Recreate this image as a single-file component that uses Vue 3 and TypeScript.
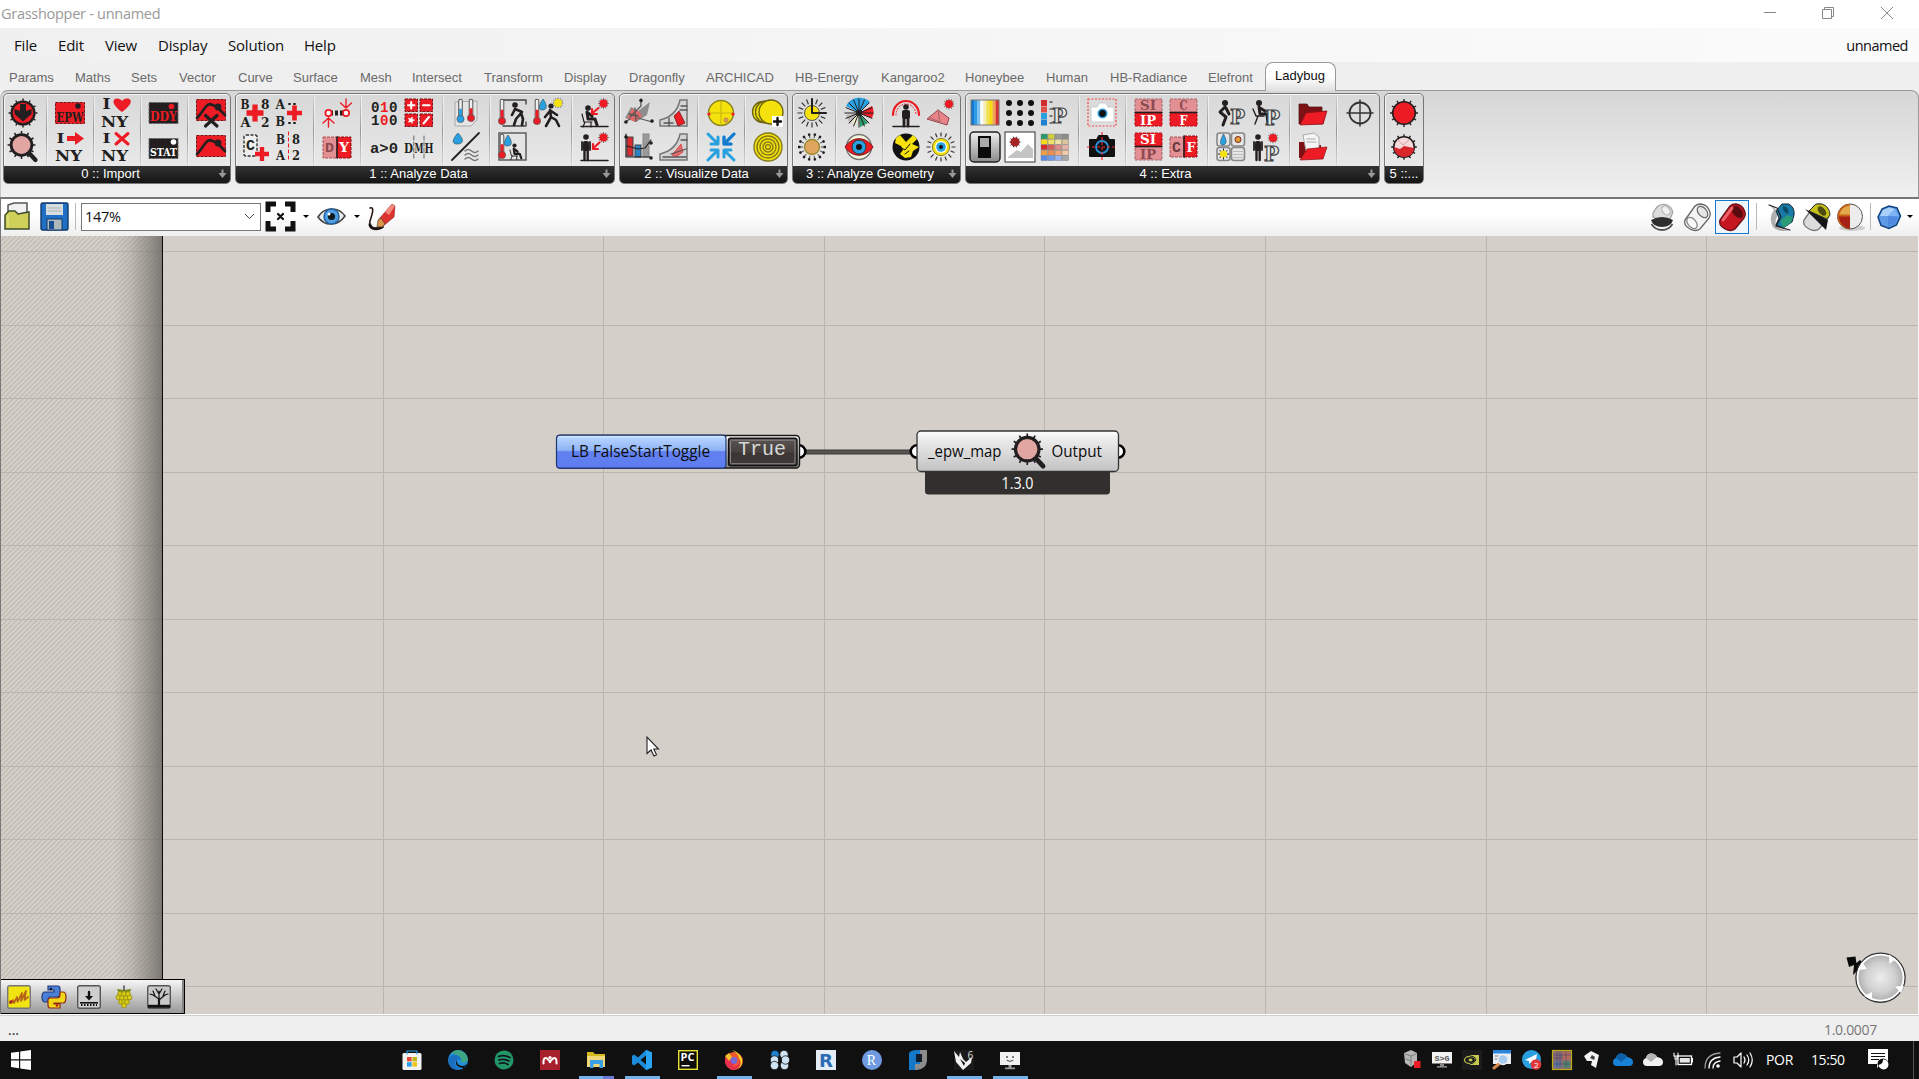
<script setup lang="ts">
interface Tab { label: string; width: number }
interface Group { title: string; width: number; more: boolean; titleShift?: number; sections: string[][][] }
interface Glyph { id: string; size?: number }
interface Task { id: string; state?: 'open' | 'multi' }

const RED = '#ed1c24'
const INK = '#231f20'
const BLUE = '#29a0e0'
const YEL = '#f5e10c'

const slab = (x: number, y: number, size: number, s: string, fill: string, len: number): string =>
  `<text x="${x}" y="${y}" font-family="DejaVu Serif, serif" font-weight="700" font-size="${size}" fill="${fill}" textLength="${len}" lengthAdjust="spacingAndGlyphs">${s}</text>`
const mono = (x: number, y: number, size: number, s: string, fill: string, len: number): string =>
  `<text x="${x}" y="${y}" font-family="Liberation Mono, monospace" font-weight="700" font-size="${size}" fill="${fill}" textLength="${len}" lengthAdjust="spacingAndGlyphs">${s}</text>`
const line = (d: string, c: string, w = 2): string =>
  `<path d="${d}" fill="none" stroke="${c}" stroke-width="${w}" stroke-linecap="round" stroke-linejoin="round"/>`
const fill = (d: string, c: string, extra = ''): string => `<path d="${d}" fill="${c}" ${extra}/>`
const disc = (x: number, y: number, r: number, c: string, extra = ''): string => `<circle cx="${x}" cy="${y}" r="${r}" fill="${c}" ${extra}/>`
const box = (x: number, y: number, w: number, h: number, c: string, extra = ''): string =>
  `<rect x="${x}" y="${y}" width="${w}" height="${h}" fill="${c}" ${extra}/>`
const rays = (cx: number, cy: number, r1: number, r2: number, n: number, c: string, w = 1.5): string => {
  let d = ''
  for (let i = 0; i < n; i++) {
    const a = (i / n) * Math.PI * 2
    d += `M${(cx + r1 * Math.cos(a)).toFixed(1)} ${(cy + r1 * Math.sin(a)).toFixed(1)}L${(cx + r2 * Math.cos(a)).toFixed(1)} ${(cy + r2 * Math.sin(a)).toFixed(1)}`
  }
  return `<path d="${d}" fill="none" stroke="${c}" stroke-width="${w}"/>`
}
const dashed = (c: string): string => `stroke="${c}" stroke-width="1" stroke-dasharray="3 1"`
const plus = (x: number, y: number, r: number, c = RED): string =>
  line(`M${x - r} ${y}H${x + r}M${x} ${y - r}V${y + r}`, c, r * 0.62).replace(/round/g, 'butt')
const thermo = (x: number, c: string, top: number, bottom: number): string =>
  line(`M${x} ${top}V${bottom}`, '#555', 4.6) + line(`M${x} ${top}V${bottom}`, '#eee', 2.6) + line(`M${x} ${(top + bottom) / 2}V${bottom}`, c, 3) + disc(x, bottom, 3.6, c, 'stroke="#555" stroke-width=".7"')
const drop = (x: number, y: number, k: number): string =>
  fill(`M${x} ${y}C${x + k} ${y + 4} ${x + k * 2} ${y + 11} ${x - 1} ${y + 11}C${x - k * 2} ${y + 11} ${x - k} ${y + 4} ${x} ${y}Z`, BLUE, 'stroke="#3a5a70" stroke-width=".7"')
const sun = (x: number, y: number, c: string): string => rays(x, y, 3, 5.3, 12, '#555', 0.9) + disc(x, y, 4, c)
const letterP = (x: number, y: number): string =>
  `<text x="${x}" y="${y}" font-family="DejaVu Serif, serif" font-weight="700" font-size="20" fill="#e8e8e8" stroke="#444" stroke-width="1.2" textLength="15" lengthAdjust="spacingAndGlyphs">P</text>`
const seated = (dx = 0): string =>
  disc(8 + dx, 10, 2.8, INK) + line(`M${7 + dx} 14L${8 + dx} 21H${15 + dx}L${17 + dx} 27M${8 + dx} 15L${12 + dx} 18`, INK, 3) + line(`M${2 + dx} 16L${4 + dx} 24H${12 + dx}M${5 + dx} 24L${3 + dx} 29M${11 + dx} 24V29`, INK, 1.2)
const standing = (dx = 0, dy = 0): string =>
  disc(7 + dx, 5 + dy, 2.8, INK) + box(4 + dx, 9 + dy, 6, 10, INK, 'rx="2"') + line(`M${3 + dx} ${10 + dy}V${18 + dy}M${11 + dx} ${10 + dy}V${18 + dy}`, INK, 1.8) + line(`M${5.5 + dx} ${18 + dy}V${28 + dy}M${8.7 + dx} ${18 + dy}V${28 + dy}`, INK, 2.4)
const chart = (): string =>
  box(0.5, 1.5, 29, 21, RED, dashed('#7b1015')) + line('M1 20C6 15 8 10 11 7.500C14 4.500 17 7 21 9L29 17', INK, 2.6) + disc(22, 9, 3.4, INK)
const aFrame = (c: string, x2 = false): string =>
  box(1, x2 ? 15 : 1, 27, 13, c, `stroke="${c === RED ? '#b01018' : '#a8686c'}" stroke-width="1" stroke-dasharray="3 1"`)
const unit = (a: string, b: string, topOn: boolean): string =>
  aFrame(topOn ? RED : '#e29094') + aFrame(topOn ? '#e29094' : RED, true) +
  slab(a.length > 1 ? 6 : 10.5, 12, 12, a, topOn ? '#fff' : '#8b4a50', a.length > 1 ? 16 : 8) +
  slab(b.length > 1 ? 6 : 10.5, 26.5, 12, b, topOn ? '#8b4a50' : '#fff', b.length > 1 ? 16 : 8) +
  line('M1 14.5H28', INK, 1.6)
const lens = (): string =>
  rays(13.5, 13, 11, 13.9, 12, INK, 1.5) + line('M21.500 21.500L27.500 28', INK, 4.2) + disc(13.5, 13, 10.4, '#e2a6a2', `stroke="${INK}" stroke-width="2.800"`)
const wind = (y: number, c: string, x = 14): string =>
  line([0, 4, 8].map((o) => `M${x} ${y + o}q3 -3 6.5 0t6.5 0`).join(''), c, 1.5)
const palette = (): string => {
  const rows = [['#2b9a6b', '#d5d03c', '#9a9a98', '#8c8c88'], ['#f5dd1a', '#f2e06a', '#efe1a6', '#ddc49d'], ['#d22c2c', '#d85a55', '#dc8c88', '#e3b4a8'], ['#eda04a', '#ef8d50', '#f2a77a', '#f1caa8'], ['#5b8bea', '#6f9bee', '#98b5f0', '#a9a9a9']]
  return rows.map((r, j) => r.map((c, i) => box(1 + i * 7, 2 + j * 5.4, 6.6, 5, c, 'stroke="#777" stroke-width=".4"')).join('')).join('')
}
const dots = (): string => {
  let s = ''
  for (let i = 0; i < 9; i++) s += disc(4 + (i % 3) * 11, 5 + Math.floor(i / 3) * 10, 3, '#111')
  return s
}
const gauge = (d: string): string => line(d, '#555', 1.3)

const art: Record<string, string> = {
  download: rays(15, 15, 12, 14.4, 12, INK, 1.4) + disc(15, 15, 11.4, RED, `stroke="${INK}" stroke-width="2.400"`) + fill('M12 6H18V13L23.500 11V16L15 23.500L6.500 16V11L12 13Z', INK),
  lens: lens(),
  epw: box(0.5, 4.5, 29, 21, RED, dashed('#7b1015')) + disc(23, 8, 2.8, INK) + slab(1.5, 23.5, 13, 'EPW', INK, 27),
  iny: slab(0.5, 11, 14, 'I', INK, 8) + slab(-1, 28.5, 15.5, 'NY', INK, 27) + fill('M20 14C7.500 5 11.500 0 15.500 .5C18.500 .8 20 3 20 3C20 3 21.500 .8 24.500 .5C29.500 0 32.500 5 20 14Z', RED),
  inyArrow: slab(1.5, 11, 13, 'I', INK, 8) + slab(0, 28.5, 15, 'NY', INK, 27) + fill('M12 4H20V0L29 6.500L20 13V9H12Z', RED),
  inyCross: slab(0.5, 11, 13, 'I', INK, 8) + slab(-1, 28.5, 15, 'NY', INK, 27) + line('M14 1.500L26 12M26 1.500L14 12', RED, 3),
  ddy: box(0, 4.5, 29, 21, INK, dashed('#666')) + disc(22.5, 8.5, 2.8, RED) + slab(1, 22.5, 12.5, 'DDY', RED, 27),
  stat: box(0, 6.5, 29, 20, INK, dashed('#666')) + disc(24.5, 10, 2.8, '#fff') + slab(1, 23.5, 11, 'STAT', '#fff', 27),
  chartX: chart() + line('M9.500 17.500L21 28M21 17.500L9.500 28', INK, 3.2),
  chart: `<g transform="translate(0 2)">${chart()}</g>`,

  addAB: slab(0.5, 11, 13, 'B', INK, 9) + slab(21, 11, 13, '8', INK, 8.5) + slab(0.5, 29, 13, 'A', INK, 10) + slab(21, 29, 13, '2', INK, 8.5) + plus(15, 15, 8.5),
  addList: slab(0.5, 10.5, 12.5, 'A', INK, 9.5) + slab(0.5, 28, 12.5, 'B', INK, 9.5) + line('M14 6H24M14 25H24', INK, 2).replace('fill="none"', 'fill="none" stroke-dasharray="1 4"') + plus(19.5, 15, 7.5),
  addC: box(4, 3, 13, 21, '#eee', 'stroke="#333" stroke-width="1.400" stroke-dasharray="3 1.500" rx="2"') + mono(6, 18, 14, 'C', INK, 9) + plus(22, 22, 7),
  split: slab(1, 12, 12.5, 'B', INK, 9) + slab(17, 12, 12.5, '8', INK, 8) + slab(1, 28, 12.5, 'A', INK, 9) + slab(17, 28, 12.5, '2', INK, 8) + line('M13.500 0V29', RED, 1).replace('fill="none"', 'fill="none" stroke-dasharray="3 3"'),
  bridge: line('M8 15H22', INK, 5).replace('round', 'butt').replace('fill="none"', 'fill="none" stroke-dasharray="3 2"') + disc(6.5, 15, 4, RED) + disc(6.5, 15, 2.2, '#fff') + disc(24, 15, 4, RED) + disc(24, 15, 2.2, '#fff') + line('M6.500 29V20M6.500 20L1 25M6.500 20L12 25M24 1V10M24 10L18.500 5M24 10L29.500 5', RED, 1.4),
  dy: box(1, 5, 14, 21, '#e29094', dashed('#b05055')) + box(15, 5, 14, 21, RED, dashed('#8b1015')) + line('M15 5V26', INK, 1.5) + mono(3, 20, 13, 'D', '#8b4a50', 9) + slab(17, 20, 12, 'Y', '#fff', 10),
  bits: mono(2, 13.5, 15, '0', INK, 8.5) + mono(11, 13.5, 15, '1', RED, 8.5) + mono(20, 13.5, 15, '0', INK, 8.5) + mono(2, 26.5, 15, '1', INK, 8.5) + mono(11, 26.5, 15, '0', RED, 8.5) + mono(20, 26.5, 15, '0', INK, 8.5),
  calc: [[1, 1], [16, 1], [1, 16], [16, 16]].map(([x, y]) => box(x, y, 12.5, 12.5, RED, dashed('#7b1015'))).join('') + line('M4 7.200H10.500M7.200 4V10.500M19 7.200H25.500M19.500 25.500L25 19', '#fff', 2) + disc(7.2, 22.2, 2, '#fff') + rays(7.2, 22.2, 1, 3.4, 5, '#fff', 1.3),
  cond: mono(1, 20.5, 15, 'a&gt;0', INK, 28),
  dmh: slab(0, 20.5, 12, 'D', INK, 9) + slab(10.5, 20.5, 12, 'M', INK, 9) + slab(20.5, 20.5, 12, 'H', INK, 9) + line('M9.800 4V27M20 4V27', '#666', 1).replace('fill="none"', 'fill="none" stroke-dasharray="4 2"'),
  thermos: fill('M4 4L26 3V22L20 28H4Z', '#e4e4e4', 'stroke="#aaa" stroke-width="1"') + thermo(9.5, BLUE, 3, 21) + thermo(20, RED, 3, 20),
  humidity: drop(7, 1, 4) + line('M1 28L28 1', INK, 1.8) + wind(19, '#777'),
  stoop: line('M5 2H28M5 28H28M28 2V6M28 24V28', '#444', 1.4) + thermo(4, RED, 3, 23) + disc(17, 7, 2.8, INK) + line('M17 11L24 14L18 21L16 27M23 15L25 21L24 27M17 11L14 17', INK, 2.6),
  walkSun: thermo(4, RED, 3, 23) + drop(10, 1, 3) + sun(25, 5, YEL) + disc(18, 8, 2.6, INK) + line('M17 12L18 19L13 28M18 19L23 22L26 28M17 13L12 19M18 13L24 17', INK, 2.6),
  roomSeat: box(1, 1, 27, 27, '#e4e4e4', 'stroke="#555" stroke-width="1.400"') + thermo(4, RED, 4, 23) + drop(10, 3, 3) + `<g transform="translate(9 6) scale(.75)">${seated(2)}</g>`,
  seatSun: seated() + line('M1 28.500H28', INK, 1.5) + sun(23.5, 5.5, RED) + line('M18.500 10L12.500 15M12 11V16H17', RED, 2.2),
  standSun: `<g transform="translate(-1 0)">${standing()}</g>` + line('M1 28.500H28', INK, 1.5) + sun(23.5, 5.5, RED) + line('M19.500 10.500L13.500 16M13 12V17H18', RED, 2.2),

  terrain: fill('M1 20L7 9L14 13L26 4L23 17L12 24Z', '#8f8d8d') + fill('M3 20L8 11L15 13L18 18L11 24Z', '#e0696b') + gauge('M6 19L17 8V1M6 21L1 24M14 20L28 24M5 16L14 18M11 10L12 23') + disc(17, 2.5, 1.8, INK) + disc(2, 24, 1.8, INK) + disc(28, 23, 1.8, INK),
  psych: fill('M1 28V22C13 19 19 12 21 2H28V28Z', '#d4d4d4', 'stroke="#777" stroke-width="1.500"') + fill('M15 18L20 13L26 25L19 28Z', RED, 'stroke="#611" stroke-width=".7"') + gauge('M5 25H14M10 20V28M22 8H28M21 12H28'),
  bars: box(3, 5, 6, 19, '#d92b30', 'stroke="#444"') + box(11, 13, 6, 12, '#2a83c4', 'stroke="#444"') + box(19, 2, 6, 23, '#999', 'stroke="#888"') + line('M2 2V25H27M3 14L14 17L21 16L27 8', INK, 1.2) + disc(2, 5, 1.8, INK) + disc(27, 11, 1.8, INK) + disc(27, 26, 1.8, INK),
  psychZone: fill('M1 28V22C13 19 19 12 21 2H28V28Z', '#d4d4d4', 'stroke="#777" stroke-width="1.500"') + fill('M13 23L22 12L24 20L17 25Z', '#e0696b', 'stroke="#d33" stroke-width=".7"') + gauge('M4 25H27M12 22L27 17M22 8H28'),
  sunpath: disc(15, 15, 12.5, YEL, 'stroke="#8a8420" stroke-width="1.500"') + line('M3 15H27M15 3V27', '#c7ba10', 1.2) + disc(3, 16, 1.6, RED) + disc(27, 16, 1.6, RED) + disc(20, 22, 2.2, '#e59a50', 'stroke="#865" stroke-width=".5"'),
  converge: line('M2 2L12 12M12 5V12H5M28 2L18 12M18 5V12H25M2 28L12 18M5 18H12V25M28 28L18 18M25 18H18V25', BLUE, 3) + line('M28 2L18 12M18 5V12H25', '#1479cf', 3),
  suns: disc(10, 14, 10.5, YEL, 'stroke="#665f10" stroke-width="1.300"') + disc(13.5, 14, 11, YEL, 'stroke="#665f10" stroke-width="1.300"') + disc(18, 14, 12, YEL, 'stroke="#665f10" stroke-width="1.300"') + box(19, 18, 11, 11, '#fff') + line('M21 23.500H28M24.500 20V27', '#111', 2.4),
  contour: [14, 11, 8, 5, 2.4].map((r) => disc(15, 15, r, YEL, 'stroke="#837b1b" stroke-width="1.400"')).join(''),

  sunClock: rays(15, 15, 9.5, 14.5, 16, '#333', 1.2) + disc(15, 15, 7.5, YEL, 'stroke="#555" stroke-width="1"') + line('M15 1V15H29', INK, 2),
  sunBrown: rays(15, 15, 9, 12, 14, '#444', 1) + rays(15, 15, 11.6, 14, 14, INK, 2.4) + disc(15, 15, 7.5, '#dfa660', 'stroke="#9b8b30" stroke-width="1.400"'),
  rose: fill('M15 15L2 8A15 15 0 0 1 26 4Z', BLUE) + fill('M15 15L28 8A13 13 0 0 1 28 20Z', RED) + fill('M15 15L24 25L16 29Z', '#2a9a6b') + fill('M15 15L6 26L2 17Z', '#b5b5b5') + fill('M15 15L12 27L8 24Z', '#edebc0') + rays(15, 15, 0, 14.5, 16, INK, 1) + disc(15, 15, 3, INK),
  viewEye: disc(15, 15, 12.5, '#f6f5dc', 'stroke="#777" stroke-width="1.500"') + fill('M1 15C8 4 22 4 29 15C22 26 8 26 1 15Z', RED, 'stroke="#7b1015" stroke-width="1"') + disc(15, 15, 7, BLUE, 'stroke="#333" stroke-width="1"') + disc(15, 15, 3, '#111'),
  dome: line('M2 17A13 14 0 0 1 28 17', RED, 2.2) + line('M5 17A10 11 0 0 1 25 17', RED, 1).replace('fill="none"', 'fill="none" stroke-dasharray="1 2"') + disc(15, 9, 2.8, INK) + box(11, 12, 8, 9, INK, 'rx="2"') + line('M13 20V28M17 20V28', INK, 2.8) + line('M2 28.500H28', INK, 1.6),
  shade: fill('M1 21L12 12L23 20L21 27Z', '#e88487', 'stroke="#94474a" stroke-width="1"') + gauge('M12 12L14 24L4 20').replace('#555', '#b5686b') + sun(23, 6, RED),
  globe: disc(15, 15, 13.5, '#111') + fill('M5 6L9 3L15 10L22 3L26 7L21 12L28 15L22 19L20 25L14 26L9 22L12 18L10 14L4 11Z', YEL) + line('M9 15L14 18L19 12M14 22L18 19', '#111', 1),
  sunEye: rays(15, 15, 10.5, 14.5, 16, '#333', 1.2) + disc(15, 15, 8.6, YEL, 'stroke="#8a8420" stroke-width="1"') + disc(15, 15, 6, '#fff') + disc(15, 15, 4.8, BLUE) + disc(15, 15, 2, '#111'),

  gradient: ['#1478d0', '#2c9be6', '#7cc2ee', '#fff', '#f4efb0', '#f4e04a', '#f5dc10', '#efa060', '#d83030'].map((c, i) => box(1 + i * 3.1, 2, 3.3, 25, c)).join('') + '<rect x="1" y="2" width="28" height="25" fill="none" stroke="#777"/>',
  dots: dots(),
  legendP: ['#d22c2c', '#e05048', '#29a0e0', '#1f80d0'].map((c, i) => box(1, 2 + i * 6.5, 6, 6, c)).join('') + line('M10 4H12M10 11H12M10 18H12M10 25H12', '#555', 1.5) + letterP(12, 25),
  viewCap: '<rect x="1" y="1" width="28" height="27" fill="none" stroke="#f0484c" stroke-width="1.200" stroke-dasharray="2 1.500"/>' + fill('M4 9H10L12 5H19L21 9H27V24H4Z', '#fff', 'stroke="#ccc"') + disc(15.5, 15.5, 5, BLUE) + disc(15.5, 15.5, 3.4, '#111'),
  toggle: '<defs><linearGradient id="tg" x2="0" y2="1"><stop stop-color="#eee"/><stop offset="1" stop-color="#8b8b8b"/></linearGradient></defs>' + '<rect x="0" y="0" width="30" height="30" rx="4" fill="url(#tg)" stroke="#222" stroke-width="1.500"/>' + box(8, 4, 13, 22, '#0b0b0b') + box(10, 6, 9, 9, '#aaa'),
  photo: box(0, 0, 30, 30, '#fff', 'stroke="#333" stroke-width="1"') + rays(10, 10, 3, 5.6, 10, '#333', 1) + disc(10, 10, 4.6, '#a62528') + fill('M3 25L12 18L16 20L23 12L28 17V26H3Z', '#c4c4c4'),
  palette: palette(),
  camera: fill('M3 8H10L12 4H20L22 8H27V24H3Z', '#111', 'stroke="#111" stroke-width="2" stroke-linejoin="round"') + '<circle cx="15" cy="15" r="6" fill="none" stroke="#2a90d8" stroke-width="1.800"/>' + line('M15 0V30M0 15H30', '#e8282e', 1.2).replace('round', 'butt').replace('fill="none"', 'fill="none" stroke-dasharray="3 2"'),
  siip: unit('SI', 'IP', false),
  siip2: unit('SI', 'IP', true),
  cf: unit('C', 'F', false),
  cf2: box(1, 5, 14, 20, '#e29094', dashed('#b05055')) + box(15, 4, 13, 21, RED, dashed('#8b1015')) + line('M15 4V25', INK, 1.5) + mono(3, 20, 14, 'C', '#6b3a40', 9) + slab(17.5, 20, 13, 'F', '#fff', 9),
  stoopP: disc(9, 5, 3, INK) + line('M9 9L4 14L10 19L7 27M10 10L13 16', INK, 3) + letterP(14, 26),
  seatP: disc(8, 5, 3, INK) + line('M8 9L9 16H16L17 26M9 10L14 13', INK, 3) + line('M2 11L5 18H13M7 18L4 26', INK, 1.4) + letterP(14, 27),
  fourUp: [[1, 1], [15.5, 1], [1, 15.5], [15.5, 15.5]].map(([x, y]) => box(x, y, 13, 13, '#e6e6e6', 'rx="2.500" stroke="#888" stroke-width="1.600"')).join('') + drop(7.5, 2, 2.4) + disc(22, 7.5, 3, '#e2a030', 'stroke="#7a2020"') + rays(7.5, 22, 3, 5.5, 8, INK, 1) + disc(7.5, 22, 3.6, YEL) + line('M17.500 19.500H26.500M17.500 22.500H26.500M17.500 25.500H26.500', '#bbb', 1.2),
  standP: standing(0, 0) + sun(22, 6, RED) + letterP(13, 29),
  folder: fill('M1 26V6H9L11 9H24V14L28 13L25 26Z', '#7d1116', 'stroke="#4a1013" stroke-width=".7"') + fill('M2 27L8 15L29 13L25 26Z', RED, 'stroke="#8b1015" stroke-width=".7"'),
  folderDoc: fill('M1 26V10H9L11 13H23V26Z', '#7d1116') + fill('M5 3L16 1L21 5V19H8Z', '#f4f4f4', 'stroke="#999" stroke-width=".8"') + line('M9 7H17M9 10H18', '#aaa', 1) + fill('M2 28L9 17L29 15L25 27Z', RED, 'stroke="#8b1015" stroke-width=".7"'),
  north: '<circle cx="15" cy="15" r="10.500" fill="none" stroke="#333" stroke-width="1.800"/>' + line('M15 2V28M2 15H28', '#333', 1.4),
  redSun: rays(15, 15, 11, 14, 12, INK, 1.4) + disc(15, 15, 11.3, RED, `stroke="${INK}" stroke-width="1.600"`),
  redSun2: rays(15, 15, 10, 12.8, 12, INK, 1.4) + disc(15, 15, 10.3, '#f4dada', `stroke="${INK}" stroke-width="1.600"`) + fill('M5 15L11 17L15 14L25 16C25 28 5 28 5 15Z', '#d8262b') + line('M9 8L14 13L20 8', '#d8a0a0', 1),
}

const S = (...cols: string[][]): string[][] => cols
const tabs: Tab[] = [
  { label: 'Params', width: 66 }, { label: 'Maths', width: 56 }, { label: 'Sets', width: 48 }, { label: 'Vector', width: 59 },
  { label: 'Curve', width: 55 }, { label: 'Surface', width: 67 }, { label: 'Mesh', width: 52 }, { label: 'Intersect', width: 72 },
  { label: 'Transform', width: 80 }, { label: 'Display', width: 65 }, { label: 'Dragonfly', width: 77 }, { label: 'ARCHICAD', width: 89 },
  { label: 'HB-Energy', width: 86 }, { label: 'Kangaroo2', width: 84 }, { label: 'Honeybee', width: 81 }, { label: 'Human', width: 64 },
  { label: 'HB-Radiance', width: 98 }, { label: 'Elefront', width: 57 },
]
const menu: Tab[] = [
  { label: 'File', width: 44 }, { label: 'Edit', width: 47 }, { label: 'View', width: 53 },
  { label: 'Display', width: 70 }, { label: 'Solution', width: 76 }, { label: 'Help', width: 40 },
]
const groups: Group[] = [
  { title: '0 :: Import', width: 228, more: true, titleShift: -13, sections: [S(['download', 'lens']), S(['epw', 'inyArrow']), S(['iny', 'inyCross']), S(['ddy', 'stat']), S(['chartX', 'chart'])] },
  { title: '1 :: Analyze Data', width: 380, more: true, titleShift: -13, sections: [S(['addAB', 'addC'], ['addList', 'split']), S(['bridge', 'dy']), S(['bits', 'cond'], ['calc', 'dmh']), S(['thermos', 'humidity']), S(['stoop', 'roomSeat'], ['walkSun']), S(['seatSun', 'standSun'])] },
  { title: '2 :: Visualize Data', width: 169, more: true, titleShift: -14, sections: [S(['terrain', 'bars'], ['psych', 'psychZone']), S(['sunpath', 'converge']), S(['suns', 'contour'])] },
  { title: '3 :: Analyze Geometry', width: 169, more: true, titleShift: -13, sections: [S(['sunClock', 'sunBrown']), S(['rose', 'viewEye']), S(['dome', 'globe'], ['shade', 'sunEye'])] },
  { title: '4 :: Extra', width: 415, more: true, titleShift: -14, sections: [S(['gradient', 'toggle'], ['dots', 'photo'], ['legendP', 'palette']), S(['viewCap', 'camera']), S(['siip', 'siip2'], ['cf', 'cf2']), S(['stoopP', 'fourUp'], ['seatP', 'standP']), S(['folder', 'folderDoc']), S(['north'])] },
  { title: '5 ::...', width: 40, more: false, titleShift: 0, sections: [S(['redSun', 'redSun2'])] },
]

const barrel = (body: string, edge: string, hole: string): string =>
  fill('M2 17L12 3Q14 1 18 1Q25 2 27 9Q28 12 26 15L17 26Q13 29 7 26Q0 22 2 17Z', body, `stroke="${edge}" stroke-width="1.300"`) +
  `<ellipse cx="19.500" cy="9" rx="4.200" ry="6.500" transform="rotate(-40 19.500 9)" fill="${hole}" stroke="${edge}" stroke-width="1.200"/>`
const tools: Record<string, string> = {
  open: fill('M4 12V3L10 1H23V12Z', '#f1f1f1', 'stroke="#555" stroke-width="1.500"') + fill('M1 27V13L5 9H11L14 12L25 10V27Z', '#cfd05a', 'stroke="#3e4d2a" stroke-width="1.500"') + line('M4 14V25', '#e8e88c', 1.2),
  save: box(1, 1, 27, 27, '#1f6fc4', 'stroke="#123a6c" stroke-width="1.400" rx="1.500"') + box(6, 2, 17, 11, '#d8dee0') + line('M8 6H21M8 9H21', '#a8b4b8', 1) + box(7, 17, 15, 11, '#aeb7ba', 'stroke="#123a6c"') + box(9, 19, 5, 8, '#1c4f92'),
  extents: line('M2 10V2H10M19 2H27V10M27 19V27H19M10 27H2V19', '#111', 5).replace(/round/g, 'butt').replace('stroke-linejoin="butt"', 'stroke-linejoin="miter"') + line('M12 12L17 17M17 12L12 17', '#111', 2.2),
  eye: fill('M1 15C7 5 21 4 28 14C21 24 8 25 1 15Z', '#eef1f2', 'stroke="#444" stroke-width="1.600"') + disc(14.5, 14.5, 7.5, '#4f9fe6', 'stroke="#23639e" stroke-width="1.500"') + disc(14.5, 14.5, 3.6, '#101820') + disc(12, 12, 1.5, '#fff'),
  pen: line('M3 6C8 4 5 13 3 19C1 27 8 28 16 25', '#2b1614', 1.6) + line('M3 23C4 27 10 28 15 25', '#1b1010', 3) + fill('M12 17L25 2L28 4L27 15L15 25Z', '#dc3330', 'stroke="#8b2020" stroke-width=".6"') + fill('M18 10L25 2L28 4L22 13Z', '#f28a80') + fill('M11 18L14 16L18 22L15 25L10 25Z', '#d9974e', 'stroke="#432" stroke-width=".6"'),
  hidden: fill('M5 14V10L9 4Q13 0 19 2Q25 5 24.500 10L22 16Q14 19 5 14Z', '#dcdcdc', 'stroke="#a4a4a4" stroke-width="1.300"') + '<ellipse cx="18" cy="7.500" rx="3.500" ry="5" transform="rotate(-40 18 7.500)" fill="#efefef" stroke="#a8a8a8"/><path d="M3 17Q14 11 25 17Q23 24 14 24Q5 24 3 17Z" fill="#2e2e2e"/><path d="M3.500 21Q7 27 14 27Q21 27 24.500 21" fill="none" stroke="#555" stroke-width="1.800"/>',
  wire: barrel('#f4f4f4', '#666', '#e6e6e6') + '<ellipse cx="9" cy="20" rx="4" ry="6.500" transform="rotate(-40 9 20)" fill="#fafafa" stroke="#888" stroke-width="1.300"/>',
  solid: barrel('#c41722', '#6b1016', '#5a0b10') + line('M5 17L14 5', '#f0626a', 3),
  picked: '<path d="M1 1Q10 5 9 14Q3 26 22 27Q10 30 5 24Q0 14 6 7Z" fill="#555" opacity=".45"/>' + fill('M8 8L14 1L21 1Q27 5 26 12L24 19L15 25L8 22L11 15Z', '#187aa8', 'stroke="#123" stroke-width="1"') + fill('M12 18L19 12L25 14L23 20L15 25Z', '#2a9a78') + line('M1 2L9 5L13 14L8 23L22 27', '#222', 1.2) + fill('M15 3Q22 4 20 11Q14 9 15 3Z', '#0d4a66'),
  cutaway: barrel('#dcdcdc', '#777', '#333') + fill('M7 8L14 1L20 1Q28 4 28 12L25 16Z', '#c4c016', 'stroke="#333" stroke-width="1"') + '<ellipse cx="20" cy="8" rx="3.200" ry="5.500" transform="rotate(-40 20 8)" fill="#4e4a10"/>' + fill('M3 6L24 27L26 17Z', '#161616'),
  sphere: '<ellipse cx="16" cy="25" rx="13" ry="3" fill="#aaa" opacity=".5"/>' + disc(14, 13.5, 12.5, '#ececec', 'stroke="#555" stroke-width="1"') + fill('M14 1A12.500 12.500 0 0 0 14 26Z', '#c86418') + fill('M14 13.500H2.500Q4.500 24.500 14 26Z', '#a62015') + fill('M14 2.500Q5.500 3.500 3.500 11.500H14Z', '#e2a84c'),
  hex: fill('M7 6L14 3L22 5L25.500 13L21.500 22L14 25.500L6 22.500L3 14Z', '#5d9ae8', 'stroke="#12427c" stroke-width="1.500"') + fill('M8 7L14 4.500L20 6L13 13L5 13Z', '#a8d0fa') + fill('M13 13L20 6L23.500 13Z', '#7fb4f4') + fill('M13 24L13 13L23 14L20 21Z', '#4f8ae0'),
}
const leftTools: Glyph[] = [{ id: 'open' }, { id: 'save' }]
const previewModes: Glyph[] = [{ id: 'hidden' }, { id: 'wire' }, { id: 'solid' }]
const previewOptions: Glyph[] = [{ id: 'picked' }, { id: 'cutaway' }, { id: 'sphere' }]

const widgets: string[] = [
  box(0.7, 0.7, 22.6, 22.6, '#f2e312', 'stroke="#777" stroke-width="1.400" rx="2"') + line('M3 18L6 15L7 18L10 12L10.500 17L15 8L14 16L19 6L17.500 15L21 12', '#b5651a', 1.7) + disc(4, 17, 1.8, '#a82018'),
  fill('M6 1H16Q18 1 18 4V10Q18 12 15 12H8Q6 12 6 16V17H3Q0 17 0 12Q0 7 3 7H12V5H6Z', '#4a7fd8', 'stroke="#233b78" stroke-width="1.200"') + fill('M18 23H8Q6 23 6 20V15Q6 13 9 13H15Q18 13 18 10V7H21Q24 7 24 12Q24 18 21 18H12V19H18Z', '#f2d818', 'stroke="#8b2a18" stroke-width="1.200"') + disc(9, 4, 1.2, '#111') + disc(15, 20.5, 1.2, '#b01818'),
  box(0.7, 0.7, 22.6, 22.6, '#cfcfcf', 'stroke="#555" stroke-width="1.400" rx="2"') + line('M12 7V12', '#111', 2.4) + fill('M8 11H16L12 15.500Z', '#111') + box(3, 17, 18, 1.6, '#111') + line('M4 20H20', '#111', 2).replace('round', 'butt').replace('fill="none"', 'fill="none" stroke-dasharray="1.500 1.500"'),
  fill('M12 5L5 4Q6 8 10 8L12 6L14 8Q19 8 19 4Z', '#7b8c18') + [[8, 9], [12, 9], [16, 9], [6.5, 12.5], [10, 13], [14, 13], [17.5, 12.5], [9, 17], [12, 17], [15, 17], [12, 20.5]].map(([x, y]) => disc(x, y, 2.4, '#d8cc16', 'stroke="#8d8312" stroke-width=".7"')).join('') + line('M12 1V5', '#444', 1.4),
  box(0.7, 0.7, 22.6, 22.6, '#c9c9c9', 'stroke="#555" stroke-width="1.400" rx="2"') + line('M12 20V14L6 10M12 15L18 10M12 14V6M8 11L6 6M16 11L18 6M6 10L3 9M18 10L21 9M12 9L9 4M12 9L15 4', '#151515', 1.2) + line('M12 20V14', '#151515', 2.2) + box(1, 19.8, 22, 3, '#111'),
]

const apps: Record<string, string> = {
  store: box(0.5, 3, 19, 17, '#f2f2f2', 'rx="1.500"') + line('M5 4V1H15V4', BLUE, 1.2) + box(5, 7, 4.6, 4.4, '#e24a35') + box(10.4, 7, 4.6, 4.4, '#c0b818') + box(5, 12.2, 4.6, 4.4, '#22a0ec') + box(10.4, 12.2, 4.6, 4.4, '#f2c41a'),
  edge: disc(10, 10, 10, '#2390dc') + fill('M3 3Q10 -3 17 3Q20 6 20 10Q18 14 13 12Q14 7 9 5Q5 4 3 3Z', '#3da484') + fill('M0 9Q3 4 8 5Q13 7 13 10Q9 8 7 12Q7 18 14 19Q4 22 1 14Z', '#1a6fc0') + fill('M9 10Q8 15 14 16Q17 16 19 14L16 18Q10 18 8 14Q8 11 9 10Z', '#101010'),
  spotify: disc(10, 10, 9.5, '#239667') + line('M4.500 6.500Q10 4.500 16 7.500M5 10Q10 8.300 15 11M5.500 13.500Q10 12 14 14.500', '#101820', 1.7),
  mendeley: box(0, 0, 20, 20, '#a8202c') + line('M3.500 13.500V11Q4 7 7 8.500L10 11.500L13 8.500Q16 7 16.500 11V13.500', '#fff', 2) + disc(10, 7.5, 1.6, '#fff') + disc(10, 12, 1.2, '#fff'),
  explorer: fill('M1 2H7L9 4H19V17H1Z', '#d3b91e') + box(1, 6, 18, 11, '#f0d878') + fill('M4 18V10H17V18H13.500V14H7.500V18Z', '#3b9fe4'),
  code: fill('M14 0L20 2.500V17.500L14 20L6 12.500L2 15.500L0 14V6L2 4.500L6 7.500ZM14 5.500L8.500 10L14 14.500Z', '#1b8bdc', 'fill-rule="evenodd"') + fill('M14 0L20 2.500V17.500L14 20V0Z', '#2aa4f0'),
  pycharm: box(0.7, 0.7, 18.6, 18.6, '#0c0c0c', 'stroke="#e8e032" stroke-width="1.400"') + `<text x="2.600" y="11" font-family="Open Sans, sans-serif" font-weight="700" font-size="10" fill="#fff" textLength="14" lengthAdjust="spacingAndGlyphs">PC</text>` + box(3.500, 15, 8, 1.4, '#fff'),
  firefox: disc(10, 11, 9, '#ee5a2c') + fill('M8 0Q15 2 18 9Q19 16 14 19Q19 13 15 8Q14 3 8 0Z', '#f2d828') + fill('M1 8Q3 4 6 4L8 7L12 9Q13 14 8 16Q15 17 16 11Q17 19 9 20Q0 18 1 8Z', '#e8304c') + disc(10, 10.5, 3.4, '#7868d8') + fill('M1 6L5 3L8 7L5 11Z', '#f4c22a'),
  slicer: [[14, 4.5, '#cfe3f3'], [5, 4.5, '#1b80d0'], [4.5, 10, '#cfe3f3'], [4.5, 15.5, '#cfe3f3'], [14.5, 15.5, '#cfe3f3'], [15.5, 10, '#cfe3f3']].map(([x, y, c]) => disc(+x, +y, 4.2, `${c}`, 'stroke="#111" stroke-width=".8"')).join('') + disc(10, 10, 1.6, '#111'),
  revit: box(0, 0, 20, 20, '#e4edf6') + `<text x="3" y="17" font-family="DejaVu Sans, sans-serif" font-weight="700" font-size="18" fill="#2b6cb4" textLength="14" lengthAdjust="spacingAndGlyphs">R</text>`,
  rstudio: disc(10, 10, 10, '#709be2') + `<text x="4.800" y="15" font-family="Liberation Serif, serif" font-size="14" fill="#fff" textLength="11">R</text>`,
  dynamo: fill('M9 0H19V11Q18 19 9 20H1V14H9Z', '#8c8c8c') + fill('M1 3Q3 0 9 0H12V14H7V20H1Z', '#1579ca') + fill('M8 4H14V12H8Z', '#101c2c'),
  rhino: box(0, 0, 20, 20, '#1b1b1b') + fill('M0 1L5 7L6 2L9 9L12 12L18 7L17 13L9 20L2 12Z', '#f2f2f2') + fill('M6 9L10 16L11 13Z', '#111') + `<text x="13.500" y="8.500" font-family="Open Sans, sans-serif" font-size="10" fill="#ddd">6</text>`,
  monitor: box(0, 2, 20, 13, '#f0f0f0') + disc(7, 7, 0.9, '#444') + disc(13, 7, 0.9, '#444') + line('M7 10.500Q10 12.500 13 10.500', '#444', 1) + box(8.500, 15, 3, 3, '#999') + box(5, 17.5, 10, 1.7, '#999'),
}
const taskbar: Task[] = [
  { id: 'store' }, { id: 'edge' }, { id: 'spotify' }, { id: 'mendeley' }, { id: 'explorer', state: 'multi' }, { id: 'code', state: 'open' }, { id: 'pycharm' },
  { id: 'firefox', state: 'open' }, { id: 'slicer' }, { id: 'revit' }, { id: 'rstudio' }, { id: 'dynamo' }, { id: 'rhino', state: 'open' }, { id: 'monitor', state: 'open' },
]
const tray: string[] = [
  fill('M2 3L9 0L15 3V12L9 17L3 13Z', '#b6b6b6') + line('M3 4L9 6V15M9 6L14 4M4 9L9 11', '#777', 0.9) + box(12, 11, 6.5, 7, '#ec1c24'),
  box(0, 2, 20, 11.5, '#f2f2f2') + mono(2.5, 10.500, 8, 'S&gt;G', '#555', 15) + box(8, 14, 4, 2.6, '#888') + box(5, 16, 10, 1.6, '#888'),
  box(0, 0, 20, 20, '#1b1b1b') + box(8, 5, 9, 10, '#c4c850') + '<ellipse cx="8" cy="10" rx="5.500" ry="3.600" fill="#1b1b1b" stroke="#c4c850" stroke-width="1.200"/><ellipse cx="8.500" cy="10" rx="2" ry="1.400" fill="#c4c850"/>' + line('M8 6Q13 6 14 10Q12 14 8 14', '#1b1b1b', 1),
  box(1, 0, 18, 14, '#e8eef4') + box(1, 0, 18, 3.5, '#2884d8') + line('M3 6H9M3 9H8', '#888', 1) + line('M7 14L2 18', '#d88a4a', 3) + disc(11, 9.5, 5, '#a6cdf0', 'stroke="#eee" stroke-width="1.300"'),
  disc(9.5, 9.5, 9.5, '#2a9fe0') + fill('M3 10L15 4L13 15L9 12L7 14V11Z', '#fff') + disc(14, 14.5, 5.3, '#e23a3c') + `<text x="12" y="17.500" font-family="Open Sans, sans-serif" font-size="8" fill="#fff">2</text>`,
  box(0.5, 0.5, 19, 19, '#8b6a74', 'stroke="#b8ac10" stroke-width="1.200"') + box(11, 2, 7, 8, '#b86a5a') + box(2, 11, 7, 7, '#6878a0') + box(11, 11, 7, 7, '#54856c') + line('M2 5H10M2 8H10M5 2V17M8 2V17M11 5H18M14 2V17M2 14H18', '#3e4868', 0.6),
  fill('M2 6L9 1L17 5L14 18L9 15L10 11L5 11Z', '#f2f2f2') + fill('M8 8L10 5L13 7L12 10Z', '#444'),
  fill('M4 16Q0 16 0 12Q0 9 3 8Q4 3 9 3.500Q13 4 14 7Q20 8 20 12Q20 16 16 16Z', '#1a82d6') + fill('M3 8Q4 3 9 3.500Q13 4 14 7L8 12Z', '#0e5ea6'),
  fill('M4 16Q0 16 0 12Q0 9 3 8Q4 3 9 3.500Q13 4 14 7Q20 8 20 12Q20 16 16 16Z', '#f2f2f2') + fill('M3 8Q4 3 9 3.500Q13 4 14 7L8 12Z', '#b4b4b4'),
  '<rect x="5" y="6" width="13.500" height="8.500" fill="none" stroke="#fff" stroke-width="1.300"/>' + box(6.8, 8, 10, 4.6, '#e8e8e8') + box(18.5, 8, 1.5, 4.500, '#fff') + line('M1 3V6H5V3M2 6V9H4V6M3 9V15', '#fff', 1.1),
  line('M2 18Q2 4 17 3', '#999', 1.3) + line('M6 18Q6 8 17 7M10 18Q10 12 17 11', '#fff', 1.3) + disc(15, 16, 1.8, '#fff'),
  line('M1 7H4L8 3V17L4 13H1ZM11 7Q13 10 11 13M14 5Q17.500 10 14 15M17 3Q21.500 10 17 17', '#fff', 1.2),
]

const gridX: number[] = Array.from({ length: 7 }, (_, i) => 382.5 + i * 220.6)
const gridY: number[] = Array.from({ length: 11 }, (_, i) => 15 + i * 73.53)
</script>

<template>
  <div class="window">
    <header class="titlebar">
      <span class="title">Grasshopper - unnamed</span>
      <svg class="win-btns" width="150" height="28" viewBox="0 0 150 28" fill="none" stroke="#888">
        <path d="M14 12.500H26" /><path d="M72.500 9.500H81.500V18.500H72.500ZM74.500 9.500V7.500H83.500V16.500H81.500" /><path d="M131 7L143 19M143 7L131 19" />
      </svg>
    </header>
    <nav class="menubar">
      <span v-for="m in menu" :key="m.label" class="menu-item" :style="{ width: m.width + 'px' }">{{ m.label }}</span>
      <span class="doc-name">unnamed</span>
    </nav>
    <nav class="tabs">
      <span v-for="t in tabs" :key="t.label" class="tab" :style="{ width: t.width + 'px' }">{{ t.label }}</span>
      <span class="tab active">Ladybug</span>
    </nav>
    <section class="ribbon">
      <div v-for="g in groups" :key="g.title" class="group" :style="{ width: g.width + 'px' }">
        <div class="sections">
          <div v-for="(s, si) in g.sections" :key="si" class="section">
            <div v-for="(c, ci) in s" :key="ci" class="col">
              <svg v-for="id in c" :key="id" class="cell" width="30" height="30" viewBox="0 0 30 30" v-html="art[id]"></svg>
            </div>
          </div>
        </div>
        <footer class="group-foot">
          <span :style="{ marginLeft: (g.titleShift ?? 0) + 'px' }">{{ g.title }}</span>
          <svg v-if="g.more" class="more" width="9" height="10" viewBox="0 0 9 10"><path d="M3.500 0.500H5.500V4H8.500L4.500 9L.5 4H3.500Z" fill="#999" /></svg>
        </footer>
      </div>
    </section>
    <section class="toolbar">
      <svg v-for="t in leftTools" :key="t.id" :class="['tool', t.id]" width="29" height="29" viewBox="0 0 29 29" v-html="tools[t.id]"></svg>
      <i class="sep first"></i>
      <div class="zoom-box"><span>147%</span><svg width="11" height="7" viewBox="0 0 11 7"><path d="M1 1L5.500 5.500L10 1" fill="none" stroke="#444" /></svg></div>
      <svg class="tool" width="29" height="29" viewBox="0 0 29 29" v-html="tools.extents"></svg>
      <i class="caret"></i>
      <svg class="tool" width="29" height="29" viewBox="0 0 29 29" v-html="tools.eye"></svg>
      <i class="caret"></i>
      <svg class="tool pen" width="29" height="29" viewBox="0 0 29 29" v-html="tools.pen"></svg>
      <div class="spacer"></div>
      <span v-for="t in previewModes" :key="t.id" :class="['mode', { on: t.id === 'solid' }]"><svg width="28" height="28" viewBox="0 0 28 28" v-html="tools[t.id]"></svg></span>
      <i class="sep mid"></i>
      <span v-for="t in previewOptions" :key="t.id" class="mode opt"><svg width="28" height="28" viewBox="0 0 28 28" v-html="tools[t.id]"></svg></span>
      <i class="sep last"></i>
      <svg class="hex" width="28" height="28" viewBox="0 0 28 28" v-html="tools.hex"></svg>
      <i class="caret end"></i>
    </section>
    <main class="canvas">
      <svg class="sheet" width="1917" height="778" viewBox="0 0 1917 778">
        <defs>
          <pattern id="hatch" width="5" height="5" patternUnits="userSpaceOnUse">
            <path d="M-1 6L6 -1M-1 1L1 -1M4 6L6 4" stroke="#bdb9b0" stroke-width="1.100" />
          </pattern>
          <linearGradient id="fade"><stop offset="0" stop-color="#77736d" stop-opacity="0" /><stop offset=".35" stop-color="#77736d" stop-opacity=".2" /><stop offset="1" stop-color="#6c6965" stop-opacity=".85" /></linearGradient>
          <linearGradient id="blue" x2="0" y2="1"><stop offset="0" stop-color="#e4f0ff" /><stop offset=".1" stop-color="#b4d2ff" /><stop offset=".46" stop-color="#8db2f6" /><stop offset=".5" stop-color="#6381ef" /><stop offset="1" stop-color="#5c7cf0" /></linearGradient>
          <linearGradient id="dark" x2="0" y2="1"><stop offset="0" stop-color="#5a5553" /><stop offset=".5" stop-color="#47423f" /><stop offset=".55" stop-color="#3b3634" /><stop offset="1" stop-color="#403b39" /></linearGradient>
          <linearGradient id="silver" x2="0" y2="1"><stop offset="0" stop-color="#fff" /><stop offset=".2" stop-color="#ececec" /><stop offset="1" stop-color="#c2c2c2" /></linearGradient>
          <linearGradient id="frame" x2="0" y2="1"><stop offset="0" stop-color="#fff" /><stop offset="1" stop-color="#8a8a86" /></linearGradient>
          <radialGradient id="knob"><stop offset="0" stop-color="#ececec" /><stop offset=".6" stop-color="#d0d0d0" /><stop offset="1" stop-color="#a9a9a9" /></radialGradient>
        </defs>
        <rect width="161" height="778" fill="url(#hatch)" />
        <g stroke="#bab5ae" shape-rendering="crispEdges">
          <path v-for="y in gridY" :key="'y' + y" :d="`M0 ${Math.round(y) + 0.5}H1917`" />
          <path v-for="x in gridX" :key="'x' + x" :d="`M${Math.round(x) - 0.5} 0V778`" />
        </g>
        <rect x="112" width="49" height="778" fill="url(#fade)" />
        <path d="M161.500 0V778" stroke="#0a0a0a" />

        <path d="M804 216H912" stroke="#3c3a38" stroke-width="5" /><path d="M804 216H912" stroke="#575552" stroke-width="3" />
        <g fill="#fff" stroke="#000" stroke-width="2.600">
          <path d="M798 209.200A6.300 6.300 0 0 1 798 221.800" /><path d="M916 209.200A6.300 6.300 0 0 0 916 221.800" /><path d="M1117 209.200A6.300 6.300 0 0 1 1117 221.800" />
        </g>
        <rect x="556" y="199.500" width="242.500" height="32.500" rx="3.500" fill="url(#frame)" stroke="#161616" stroke-width="1.400" />
        <rect x="555.500" y="199.200" width="169.500" height="33" rx="3.500" fill="url(#blue)" stroke="#1c3470" stroke-width="1.200" />
        <rect x="727.500" y="202.200" width="68.500" height="27.500" rx="2" fill="url(#dark)" stroke="#111" stroke-width="1.400" />
        <rect x="729.500" y="204.200" width="64.500" height="23.500" rx="1" fill="none" stroke="#8a8684" />
        <text x="570" y="221" class="node" textLength="139" lengthAdjust="spacingAndGlyphs">LB FalseStartToggle</text>
        <text x="737" y="219" class="value" textLength="48" lengthAdjust="spacingAndGlyphs">True</text>

        <path d="M924 234H1109V255Q1109 258.500 1105.500 258.500H927.500Q924 258.500 924 255Z" fill="#32302f" />
        <rect x="916" y="195" width="201.500" height="40.500" rx="4" fill="url(#silver)" stroke="#333" stroke-width="1.300" />
        <text x="927" y="221" class="node" textLength="73.500" lengthAdjust="spacingAndGlyphs">_epw_map</text>
        <text x="1050.500" y="221" class="node" textLength="50.500" lengthAdjust="spacingAndGlyphs">Output</text>
        <text x="1000.500" y="252.500" class="ver" textLength="32" lengthAdjust="spacingAndGlyphs">1.3.0</text>
        <g transform="translate(1011 198.500) scale(1.130)" v-html="art.lens"></g>

        <path d="M646 501V517.500L650 514L653 520L655.500 518.800L652.800 513H657.500Z" fill="#fff" stroke="#222" stroke-width="1.100" />

        <path d="M1845.500 721.500L1854.500 720.500L1855.500 728L1848 731ZM1853 729L1859 724L1862 727L1856 735L1852 739Z" fill="#0a0a0a" />
        <circle cx="1879.500" cy="741.700" r="24.500" fill="url(#knob)" stroke="#333" stroke-width="1.400" />
        <circle cx="1879.500" cy="741.700" r="23" fill="none" stroke="#fff" stroke-width="1.800" />
        <path d="M1888 718.500L1894.500 723L1888.500 728ZM1903 750L1894 750.500L1900 757ZM1871 764L1871 756L1863 760ZM1857 734L1866 733L1861 726Z" fill="#fff" />
      </svg>
      <div class="widget-bar">
        <svg v-for="(w, i) in widgets" :key="i" width="24" height="24" viewBox="0 0 24 24" v-html="w"></svg>
        <i class="grip"></i>
      </div>
    </main>
    <footer class="status"><span class="dots">...</span><span class="version">1.0.0007</span></footer>
    <footer class="taskbar">
      <svg class="start" width="20" height="20" viewBox="0 0 20 20"><path d="M0 2.800L8 1.700V9.300H0ZM9.200 1.500L20 0V9.300H9.200ZM0 10.500H8V18.200L0 17.100ZM9.200 10.500H20V20L9.200 18.400Z" fill="#fff" /></svg>
      <div class="apps">
        <div v-for="a in taskbar" :key="a.id" :class="['app', a.state]"><svg width="20" height="20" viewBox="0 0 20 20" v-html="apps[a.id]"></svg></div>
      </div>
      <div class="tray">
        <span v-for="(t, i) in tray" :key="i" class="tray-item"><svg width="20" height="20" viewBox="0 0 20 20" v-html="t"></svg></span>
        <span class="lang">POR</span>
        <span class="clock">15:50</span>
        <svg class="note" width="20" height="21" viewBox="0 0 20 21"><path d="M0 0H20V15H13L9 19V15H0Z" fill="#fff" /><path d="M3 4.500H17M3 7.500H17M3 10.500H11" stroke="#111" /><circle cx="15" cy="15" r="5.500" fill="#111" /><path d="M15 10.500A5 5 0 1 1 10.500 16A5.500 5.500 0 0 0 15 10.500Z" fill="#fff" /></svg>
        <i class="peek"></i>
      </div>
    </footer>
  </div>
</template>

<style>
html, body { overflow: hidden; background: #f0f0f0; }
</style>

<style scoped>
.window { width: 1919px; height: 1079px; display: flex; flex-direction: column; overflow: hidden; font-family: "Open Sans", "Noto Sans", sans-serif; color: #111; background: #efefef; }
.window svg { display: block; flex: none; overflow: visible; }
.window svg.sheet { overflow: hidden; }
.titlebar { height: 28px; background: #fff; display: flex; justify-content: space-between; align-items: center; flex: none; }
.title { font-size: 14.500px; color: #999; padding: 0 0 2px 1px; letter-spacing: -0.28px; }
.win-btns { margin-right: 19px; }
.menubar { height: 34px; flex: none; display: flex; align-items: center; padding-left: 14px; background: linear-gradient(90deg, #f0f0f0, #fbfbfb); font-size: 15px; letter-spacing: -0.2px; box-sizing: border-box; }
.menu-item { flex: none; }
.doc-name { margin-left: auto; margin-right: 11px; font-size: 14.500px; letter-spacing: -0.5px; }
.tabs { height: 28px; flex: none; display: flex; align-items: center; padding-left: 9px; font: 13px "Liberation Sans", Arial, sans-serif; color: #6a6a6a; }
.tab { flex: none; padding-top: 2px; }
.tab.active { box-sizing: border-box; width: 71px; height: 29px; align-self: flex-start; padding: 5px 0 0 9px; color: #111; background: linear-gradient(#fff 50%, #e0e0e0); border: 1px solid #9a9a9a; border-bottom: 0; border-radius: 8px 8px 0 0; position: relative; z-index: 1; }
.ribbon { height: 107px; flex: none; box-sizing: border-box; border: 1px solid #9a9a9a; border-left-color: #c6c6c6; border-bottom: 0; border-radius: 8px 8px 0 0; background: linear-gradient(#d6d6d6, #f0f0f0); padding: 2px 0 0 2px; display: flex; gap: 4px; align-items: flex-start; }
.group { flex: none; height: 91px; box-sizing: border-box; border: 1px solid #777; border-radius: 5px; overflow: hidden; background: linear-gradient(#d8d8d8, #ececec); display: flex; flex-direction: column; box-shadow: inset 1px 1px #f5f5f5; }
.sections { height: 72px; display: flex; justify-content: center; box-sizing: border-box; padding-top: 2px; flex: none; }
.section { display: flex; flex: none; }
.section + .section { margin-left: 5px; padding-left: 6px; border-left: 1px solid transparent; border-image: linear-gradient(#d0d0d0, #999 50%, #d8d8d8) 1; box-shadow: inset 1px 0 #eee; }
.col { width: 35px; display: flex; flex-direction: column; align-items: center; padding-top: 2px; gap: 4px; }
.group-foot { flex: 1; background: linear-gradient(#333, #141414); color: #fff; font: 13px "Liberation Sans", Arial, sans-serif; display: grid; grid-template: 1fr / 1fr; place-items: center; white-space: nowrap; padding-bottom: 2px; }
.group-foot > * { grid-area: 1 / 1; }
.more { justify-self: end; margin-right: 3px; }
.toolbar { height: 39px; flex: none; box-sizing: border-box; border-top: 2px solid #777; border-left: 1px solid #777; background: linear-gradient(#fff 40%, #efefef); display: flex; align-items: center; padding: 0 0 2px 3px; }
.tool.save { margin-left: 7px; }
.sep { width: 1px; height: 27px; background: #bbb; flex: none; }
.sep.first { margin: 0 5px 0 6px; }
.zoom-box { width: 180px; height: 28px; box-sizing: border-box; border: 1px solid #777; background: #fff; display: flex; align-items: center; justify-content: space-between; padding: 0 5px 0 3px; font-size: 14.500px; letter-spacing: -0.3px; margin-right: 5px; }
.caret { width: 0; height: 0; border: 3px solid transparent; border-top-color: #000; border-bottom: 0; margin: 0 8px; flex: none; }
.tool.pen { margin-left: -1px; }
.spacer { flex: 1; }
.mode { width: 34px; height: 34px; box-sizing: border-box; border: 1px solid transparent; display: grid; place-items: center; margin-left: 1px; }
.mode.on { border-color: #1378d0; background: #eef5fb; }
.mode.opt { margin-left: 0; }
.sep.mid { margin: 0 8px 0 7px; }
.sep.last { margin: 0 4px 0 3px; }
.caret.end { margin: 0 6px 0 4px; }
.canvas { height: 778px; flex: none; margin: 0 1px; background: #d4cfc8; box-shadow: -1px 0 #777, 1px 0 #f4f4f4; position: relative; }
.node { font-size: 16px; fill: #0c0c0c; }
.ver { font-size: 15.500px; fill: #fff; }
.value { font: 20px "Liberation Mono", monospace; fill: #d8d8d8; }
.widget-bar { position: absolute; left: 0; bottom: 0; width: 184px; height: 35px; box-sizing: border-box; border: 1px solid #000; border-left: 0; background: linear-gradient(#f6f6f6, #d0d0d0 40%, #9a9a9a); display: flex; align-items: center; gap: 11px; padding-left: 6px; }
.grip { align-self: stretch; width: 7px; margin-left: auto; background: #858383; }
.status { height: 27px; flex: none; box-sizing: border-box; border-top: 1px solid #fff; box-shadow: inset 0 1px #cfcfcf; display: flex; justify-content: space-between; align-items: center; padding: 2px 42px 0 8px; font-size: 14px; color: #777; }
.dots { color: #222; }
.version { letter-spacing: -0.3px; }
.taskbar { height: 38px; flex: none; background: #101010; display: flex; color: #fff; }
.start { margin: 9px 0 0 11px; }
.apps { display: flex; margin-left: 358px; }
.app { width: 46px; height: 38px; box-sizing: border-box; padding: 9px 13px 0; }
.app.open, .app.multi { background: linear-gradient(#76b2ea, #76b2ea) 6px 35px / 35px 3px no-repeat; }
.app.multi { background: linear-gradient(90deg, #76b2ea 24px, #6a7ad8 24px) 6px 35px / 35px 3px no-repeat; }
.tray { margin-left: auto; display: flex; align-items: center; font-size: 14px; padding-bottom: 1px; }
.tray-item { width: 30.100px; display: flex; }
.lang { width: 45px; margin-left: 3px; letter-spacing: -0.3px; }
.clock { width: 57px; letter-spacing: -0.4px; }
.note { margin-right: 25px; }
.peek { width: 1px; height: 38px; background: #555; margin-right: 5px; }
</style>
